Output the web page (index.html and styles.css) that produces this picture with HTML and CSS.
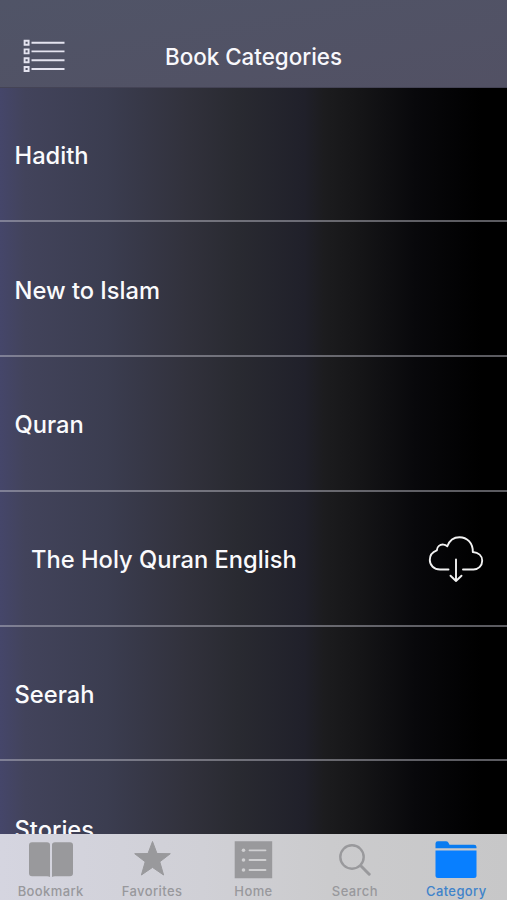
FILE: index.html
```html
<!DOCTYPE html>
<html lang="en">
<head>
<meta charset="utf-8">
<title>Book Categories</title>
<link rel="stylesheet" href="styles.css">
</head>
<body>
<div class="app">
  <header class="navbar">
    <svg class="menu" width="42" height="34" viewBox="0 0 42 34" fill="none" stroke="#e4e3ef">
      <path stroke-width="1.9" d="M1.6 1.7h4v4h-4zM1.6 10.4h4v4h-4zM1.6 19.2h4v4h-4zM1.6 28h4v4h-4z"/>
      <path stroke-width="1.9" d="M8.5 3.7h33M8.5 12.4h33M8.5 21.3h33M8.5 30h33"/>
    </svg>
    <h1 class="title"><span>Book Categories</span></h1>
  </header>
  <main class="list">
    <div class="row"><span>Hadith</span></div>
    <div class="row"><span>New to Islam</span></div>
    <div class="row"><span>Quran</span></div>
    <div class="row child"><span>The Holy Quran English</span>
      <svg class="cloud" width="56" height="48" viewBox="0 0 56 48" fill="none" stroke="#f2f2f2" stroke-width="1.9" stroke-linecap="round" stroke-linejoin="round">
        <path d="M20.5 34.5H12C6 34.5 1.8 30.3 1.8 25C1.8 20.5 4.4 17 8.8 15.4C9 11.4 12 9.3 15.5 9.6C17 9.7 18.3 10.4 19.3 11.3C21.5 5.2 26 2.2 31.5 2.2C39 2.2 45 8 44.8 17C50.5 17.4 54.2 20.8 54.2 25.7C54.2 31 50 34.5 45.5 34.5H35"/>
        <path d="M28 24.5V46M22.5 40.7L28 46l5.5-5.3"/>
      </svg>
    </div>
    <div class="row"><span>Seerah</span></div>
    <div class="row"><span>Stories</span></div>
  </main>
  <nav class="tabs">
    <a class="tab"><svg width="46" height="40" viewBox="0 0 46 40"><path fill="#99999c" d="M4 2.2H19Q22 2.2 22 5V37Q21 36.3 19 36.3H4Q1 36.3 1 33.3V5.2Q1 2.2 4 2.2zM27 2.2H42Q45 2.2 45 5.2V33.3Q45 36.3 42 36.3H27Q25 36.3 24 37V5Q24 2.2 27 2.2z"/></svg><span>Bookmark</span></a>
    <a class="tab"><svg width="46" height="40" viewBox="0 0 46 40"><path fill="#99999c" stroke="#99999c" stroke-linejoin="round" d="M23.5 1.5L28 13.5L41.3 13.7L30.8 21.8L34.6 35L23.5 27.4L12.4 35L16.2 21.8L5.7 13.7L19 13.5z"/></svg><span>Favorites</span></a>
    <a class="tab"><svg width="46" height="40" viewBox="0 0 46 40"><path fill="#99999c" d="M4.7 1.2h37.5v37H4.7z"/><path stroke="#d0d0d2" stroke-width="1.8" stroke-linecap="round" d="M19.5 10.3h16M19.5 20h16M19.5 30h16"/><g fill="#d0d0d2"><circle cx="13.5" cy="10.3" r="1.8"/><circle cx="13.5" cy="20" r="1.8"/><circle cx="13.5" cy="30" r="1.8"/></g></svg><span>Home</span></a>
    <a class="tab"><svg width="46" height="40" viewBox="0 0 46 40" fill="none" stroke="#99999c"><circle cx="20" cy="17" r="11.7" stroke-width="2.4"/><path stroke-width="3" stroke-linecap="round" d="M29 26l8.2 8.2"/></svg><span>Search</span></a>
    <a class="tab active"><svg width="46" height="40" viewBox="0 0 46 40"><path fill="#087bf0" d="M2.5 8.2V3.5Q2.5 1.2 4.8 1.2H13Q14.5 1.2 15.3 2.5L16.5 4.7H41Q43.5 4.7 43.5 7V8.2z"/><path fill="#087fff" d="M2.5 10.5h41V35.5Q43.5 38 41 38H5Q2.5 38 2.5 35.5z"/></svg><span>Category</span></a>
  </nav>
</div>
</body>
</html>
```
FILE: styles.css
```css
* { box-sizing: border-box; }
body { margin: 0; font-family: Inter, "Liberation Sans", sans-serif; background: #000; }
.app { height: 900px; display: flex; flex-direction: column; overflow: hidden; }
.navbar {
  height: 87.5px; flex: none; padding: 27px 23px 0;
  display: grid; grid-template-columns: 42px 1fr 42px; align-items: center;
  background: linear-gradient(170deg, #505467, #525164);
  border-bottom: 1px solid #444355;
}
.title { margin: 0; text-align: center; font-size: 22.4px; font-weight: 500; line-height: 28px; color: #f8f8fc; white-space: nowrap; }
.menu { margin-top: -1px; }
.list {
  flex: 1; min-height: 0; overflow: hidden;
  background: linear-gradient(90deg, #45466a 0, #42435b 5%, #3b3d50 21%, #32323d 36%, #292a31 47%, #20202a 60%, #1c1c1e 64%, #141416 72%, #08080b 82%, #000 95%);
}
.row {
  height: 134.8px; padding: 3px 23px 0 14.5px;
  display: flex; align-items: center; justify-content: space-between;
  border-bottom: 2px solid rgba(190, 190, 200, .48);
  color: #fafafc; font-size: 23.7px; font-weight: 500; white-space: nowrap;
}
.child { padding-left: 31px; }
.cloud { margin-top: -2px; }
.tabs {
  height: 66px; flex: none; display: grid; grid-template-columns: repeat(5, 1fr);
  background: linear-gradient(90deg, #d5d5e0, #d0d0d6 40%, #cbcbcd 65%, #c7c7c8);
}
.tab {
  display: flex; flex-direction: column; align-items: center; padding-top: 6px;
  color: #98989c; font-size: 13px; font-weight: 500; line-height: 16px; letter-spacing: .4px;
}
.tab span { margin-top: 3px; }
.active { color: #3f83ca; }
```
